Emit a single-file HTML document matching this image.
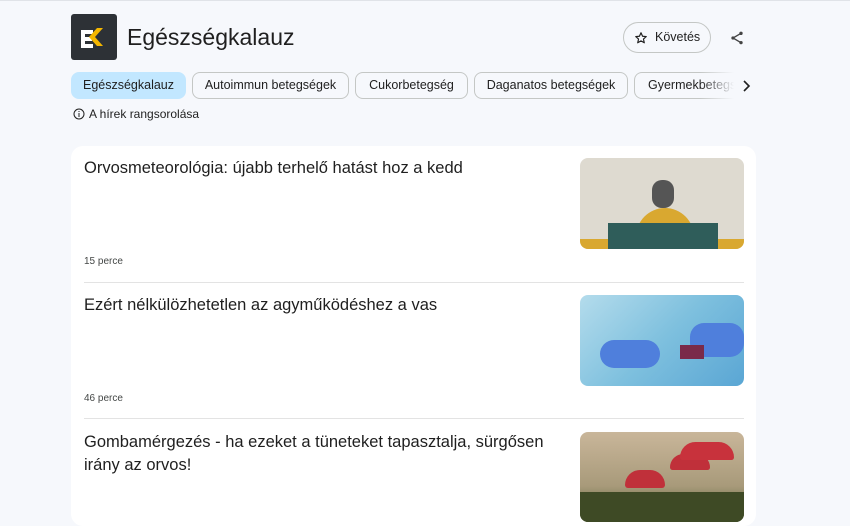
<!DOCTYPE html>
<html><head><meta charset="utf-8"><style>
*{margin:0;padding:0;box-sizing:border-box}
body{width:850px;height:510px;overflow:hidden;background:#f6f8fc;font-family:"Liberation Sans",sans-serif;color:#1f1f1f;position:relative;border-top:1px solid #e0e3e8}
.abs{position:absolute}
.logo{left:71px;top:13px;width:46px;height:46px;background:#2d3136;border-radius:3px}
.title{left:127px;top:23px;font-size:23px;color:#1f1f1f}
.follow{left:623px;top:21px;width:88px;height:31px;border:1px solid #c4c7c5;border-radius:16px;font-size:12.5px;color:#1f1f1f;line-height:29px;padding-left:31px}
.chip{top:71px;height:27px;border:1px solid #c4c7c5;border-radius:8px;font-size:12.5px;line-height:25px;text-align:center;color:#1f1f1f;background:#f6f8fc;white-space:nowrap;overflow:hidden}
.card{left:71px;top:145px;width:685px;height:380px;background:#fff;border-radius:12px}
.h{left:84px;font-size:16.5px;line-height:23px;color:#1f1f1f;width:475px}
.t{left:84px;font-size:10px;color:#444746}
.sep{left:84px;width:660px;height:1px;background:#e3e3e3}
.img{left:580px;width:164px;height:91px;border-radius:8px;overflow:hidden}
</style></head><body>
<div class="abs logo"><svg width="46" height="46"><path d="M10 16h12v4h-8v3h7v4h-7v3h8v4H10z" fill="#fff"/><path d="M26 14h6l-8 9 8 9h-6l-8-9z" fill="#f5b700"/></svg></div>
<div class="abs title">Egészségkalauz</div>
<div class="abs follow"><svg class="abs" style="left:10px;top:8px" width="14" height="14" viewBox="0 0 24 24"><path d="M12 3l2.7 6 6.3.6-4.8 4.2 1.4 6.4L12 17l-5.6 3.2 1.4-6.4L3 9.6 9.3 9z" fill="none" stroke="#1f1f1f" stroke-width="2" stroke-linejoin="round"/></svg>Követés</div>
<svg class="abs" style="left:729px;top:29px" width="16" height="16" viewBox="0 0 24 24"><circle cx="18" cy="5" r="2.5" fill="#444"/><circle cx="6" cy="12" r="2.5" fill="#444"/><circle cx="18" cy="19" r="2.5" fill="#444"/><path d="M18 5L6 12l12 7" stroke="#444" stroke-width="2" fill="none"/></svg>
<div class="abs chip" style="left:71px;width:115px;background:#c2e7ff;border-color:#c2e7ff">Egészségkalauz</div>
<div class="abs chip" style="left:192px;width:157px">Autoimmun betegségek</div>
<div class="abs chip" style="left:355px;width:113px">Cukorbetegség</div>
<div class="abs chip" style="left:474px;width:154px">Daganatos betegségek</div>
<div class="abs chip" style="left:634px;width:100px;text-align:left;padding-left:13px;border-right:none;border-radius:8px 0 0 8px">Gyermekbetegségek</div>
<div class="abs" style="left:700px;top:71px;width:34px;height:27px;background:linear-gradient(90deg,rgba(246,248,252,0),#f6f8fc)"></div>
<svg class="abs" style="left:741px;top:79px" width="10" height="12" viewBox="0 0 10 12"><path d="M3 1l5 5-5 5" stroke="#1f1f1f" stroke-width="1.6" fill="none"/></svg>
<svg class="abs" style="left:73px;top:107px" width="12" height="12" viewBox="0 0 12 12"><circle cx="6" cy="6" r="5" stroke="#1f1f1f" fill="none"/><path d="M6 5v4M6 3v1" stroke="#1f1f1f"/></svg>
<div class="abs" style="left:89px;top:106px;font-size:12px">A hírek rangsorolása</div>
<div class="abs card"></div>
<div class="abs h" style="top:156px">Orvosmeteorológia: újabb terhelő hatást hoz a kedd</div>
<div class="abs t" style="top:255px">15 perce</div>
<div class="abs img" style="top:157px;background:#dedad0"><div class="abs" style="left:0;bottom:0;width:164px;height:10px;background:#d9a830"></div><div class="abs" style="left:56px;top:50px;width:58px;height:30px;border-radius:30px 30px 0 0;background:#d9a830"></div><div class="abs" style="left:28px;top:65px;width:110px;height:26px;background:#2f5d5a"></div><div class="abs" style="left:72px;top:22px;width:22px;height:28px;border-radius:10px;background:#555"></div></div>
<div class="abs sep" style="top:281px"></div>
<div class="abs h" style="top:293px">Ezért nélkülözhetetlen az agyműködéshez a vas</div>
<div class="abs t" style="top:392px">46 perce</div>
<div class="abs img" style="top:294px;background:linear-gradient(135deg,#b4dcec,#7ec0de 50%,#5aa6d4)"><div class="abs" style="left:20px;top:45px;width:60px;height:28px;border-radius:14px;background:#4f7fdc"></div><div class="abs" style="left:110px;top:28px;width:54px;height:34px;border-radius:14px;background:#4f7fdc"></div><div class="abs" style="left:100px;top:50px;width:24px;height:14px;background:#7a2a4a"></div></div>
<div class="abs sep" style="top:417px"></div>
<div class="abs h" style="top:430px">Gombamérgezés - ha ezeket a tüneteket tapasztalja, sürgősen irány az orvos!</div>
<div class="abs img" style="top:431px;height:90px;background:linear-gradient(180deg,#c9b69a,#a89a7a 60%,#4a5a30)"><div class="abs" style="left:45px;top:38px;width:40px;height:18px;border-radius:20px 20px 4px 4px;background:#c0303a"></div><div class="abs" style="left:90px;top:22px;width:40px;height:16px;border-radius:20px 20px 4px 4px;background:#c0303a"></div><div class="abs" style="left:100px;top:10px;width:54px;height:18px;border-radius:24px 24px 4px 4px;background:#c8323c"></div><div class="abs" style="left:0;top:60px;width:164px;height:30px;background:#3e4a25"></div></div>
</body></html>
